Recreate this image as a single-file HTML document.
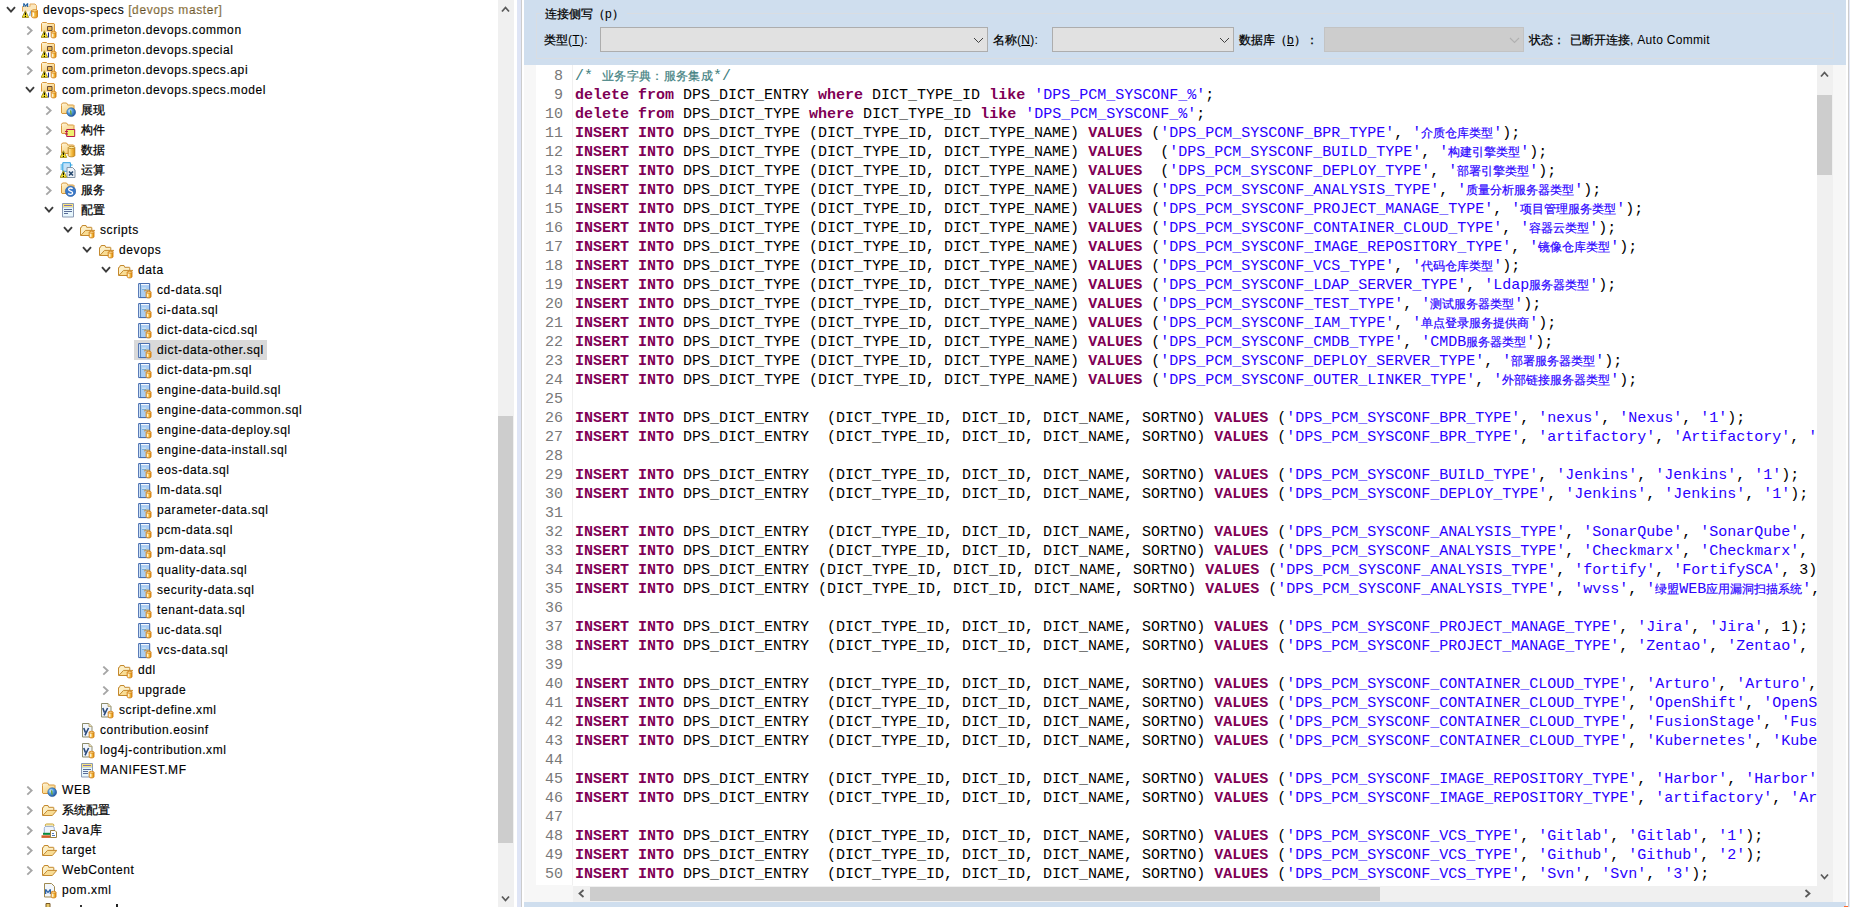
<!DOCTYPE html>
<html><head><meta charset="utf-8">
<style>
*{margin:0;padding:0;box-sizing:border-box}
html,body{width:1850px;height:907px;overflow:hidden;background:#fff}
body{position:relative;font-family:"Liberation Sans",sans-serif;font-size:12px;color:#000}
.a{position:absolute}
#tree{position:absolute;left:0;top:0;width:498px;height:907px;overflow:hidden}
.chv,.ic{position:absolute}
.tt{position:absolute;white-space:pre;line-height:20px;font-size:12px;letter-spacing:0.6px;color:#000;-webkit-text-stroke:0.15px #000}
.tt .cj{font-size:12px;letter-spacing:0;-webkit-text-stroke:0.25px #000}
.tt .br{color:#a6884c}
.selbg{position:absolute;left:134px;top:340px;width:133px;height:20px;background:#d9d9d9}
/* editor */
#ed{position:absolute;left:524px;top:0;width:1322px;height:907px;background:#f7f7f7}
#panel{position:absolute;left:0;top:0;width:1322px;height:65px;background:#cfdeee}
.gb{position:absolute;left:12px;top:13px;width:1298px;height:46px;border:1px solid #d9dde2}
.lbl{position:absolute;white-space:pre;font-size:12px;line-height:16px;letter-spacing:0.3px}
.lbl .cj{letter-spacing:0;-webkit-text-stroke:0.25px #000}
.combo{position:absolute;top:27px;height:25px;background:#e1e1e1;border:1px solid #adadad}
.combo svg{position:absolute;right:3px;top:9px}
#ruler{position:absolute;left:12px;top:65px;width:37px;height:820px;background:#fff;border-right:1px solid #f0f0f0;overflow:hidden}
#code{position:absolute;left:49px;top:65px;width:1244px;height:821px;background:#fff;overflow:hidden}
.nl{height:19px;line-height:19px;font-family:"Liberation Mono",monospace;font-size:15px;color:#787878;text-align:right;padding-right:10px;white-space:pre}
.cl{height:19px;line-height:19px;font-family:"Liberation Mono",monospace;font-size:15px;color:#000;white-space:pre;padding-left:2px}
.cl b{color:#7f0055;font-weight:bold}
.cl .st{color:#2a00ff}
.cl .cm{color:#3f7f7f}
.cl .cm .cj{letter-spacing:0.33px}
.cl .cj{font-size:12px;-webkit-text-stroke:0.2px currentColor}
#nums{position:absolute;left:0;top:2px;width:37px}
#lines{position:absolute;left:0;top:2px}
</style></head><body>
<svg width="0" height="0" style="position:absolute">
<defs>
<linearGradient id="fg" x1="0" y1="0" x2="0.6" y2="1"><stop offset="0" stop-color="#fff6dc"/><stop offset="1" stop-color="#f7cf78"/></linearGradient>
<linearGradient id="dbg" x1="0" y1="0" x2="1" y2="0"><stop offset="0" stop-color="#fff2c0"/><stop offset="0.5" stop-color="#f7c24a"/><stop offset="1" stop-color="#d98e12"/></linearGradient>
<radialGradient id="glb" cx="0.35" cy="0.35" r="0.7"><stop offset="0" stop-color="#e8f4ff"/><stop offset="0.45" stop-color="#4d9be0"/><stop offset="1" stop-color="#1f4f96"/></radialGradient>
<g id="g-fold"><path d="M1.5 3.5v-1.2l1-1.3h4l1 1.3v0.7h6l0.5 0.5v7.5l-0.5 0.5h-11.5l-0.5-0.5z" fill="url(#fg)" stroke="#d8983a"/></g>
<g id="g-ofold"><path d="M1.5 13.5V5.8q0-0.5 0.5-0.5h0.5l0.7-1.8h3.8l0.7 1.8h4.6q0.5 0 0.5 0.5v2.6" fill="#fcefc6" stroke="#c4892e"/><path d="M1.8 13.5l4.7-5.1h9.3l-4.5 5.1z" fill="#f8dc94" stroke="#c4892e"/></g>
<g id="g-warn"><path d="M3.4 8.8l3.3 6.6h-6.6z" fill="#ffea2a" stroke="#9a8a20" stroke-width="0.9" stroke-linejoin="round"/><path d="M3.4 10.6v2.6M3.4 14v0.9" stroke="#000" stroke-width="1.1"/></g>
<g id="g-db"><path d="M10.2 10.2v4.6c0 0.7 1.1 1.1 2.4 1.1s2.4-0.4 2.4-1.1v-4.6z" fill="url(#dbg)" stroke="#d07a10" stroke-width="0.9"/><ellipse cx="12.6" cy="10.2" rx="2.4" ry="0.9" fill="#ffe9a8" stroke="#d07a10" stroke-width="0.8"/><path d="M11.8 11.8v3" stroke="#fff" stroke-width="0.9"/></g>
<g id="g-glb"><circle cx="11.2" cy="10.2" r="4.4" fill="url(#glb)" stroke="#2d5f9e" stroke-width="0.6"/><path d="M10 8.2c1 0 1.8 0.6 1.5 1.6s0.8 2 -0.2 3.6c-0.5-1.2-1.5-1.8-1.2-3s-0.8-1.5-0.1-2.2z" fill="#6aa33a"/></g>
<symbol id="i-project" viewBox="0 0 16 17"><path d="M0.5 9.5v-5h7.5v-2.5h5l1.5 1.5v6" fill="#fbe7bd" stroke="#e3a85a"/><path d="M1 4.5h6.5" stroke="#f6d9a0"/><path d="M1.2 5V1.2h1.2l1.3 2 1.3-2h1.2V5h-1.1V3l-1.4 2-1.4-2v2z" fill="#1d5d9e"/><path d="M7.8 14c0-3 0.8-4.8 2.5-5.5" fill="none" stroke="#7fb2e0" stroke-width="1.3"/><use href="#g-warn"/><path d="M9.6 8.8v5.8c0 0.8 1.4 1.3 3 1.3s3-0.5 3-1.3v-5.8z" fill="url(#dbg)" stroke="#d07a10" stroke-width="0.9"/><ellipse cx="12.6" cy="8.8" rx="3" ry="1.1" fill="#ffe08a" stroke="#d07a10" stroke-width="0.8"/><path d="M11.6 10.6v3.5" stroke="#fff" stroke-width="1"/></symbol>
<symbol id="i-pkg" viewBox="0 0 16 17"><path d="M0.5 9.5v-8l1-1h4l1 1h6.5l0.5 0.5v8" fill="url(#fg)" stroke="#d8983a"/><path d="M6.5 4.5h4.5v4h-4.5z" fill="#e9b84e" stroke="#6a4a3a"/><use href="#g-warn"/><path d="M7.5 10.5v5" stroke="#1a2a8a" stroke-width="1.1"/><use href="#g-db"/></symbol>
<symbol id="i-globe" viewBox="0 0 16 17"><use href="#g-fold"/><use href="#g-glb"/></symbol>
<symbol id="i-comp" viewBox="0 0 16 17"><use href="#g-fold"/><path d="M6.7 7.5h8v7h-8z" fill="#eef070" stroke="#b81a48" stroke-width="1"/><path d="M5 9.5h3M5 12h3" stroke="#b81a48" stroke-width="1.1"/></symbol>
<symbol id="i-data" viewBox="0 0 16 17"><use href="#g-fold"/><path d="M8.2 5.5v8c0 0.8 1.5 1.3 3.3 1.3s3.3-0.5 3.3-1.3v-8z" fill="url(#dbg)" stroke="#b8801a" stroke-width="0.9"/><ellipse cx="11.5" cy="5.5" rx="3.3" ry="1.1" fill="#ffe9a0" stroke="#b8801a" stroke-width="0.8"/><use href="#g-warn"/></symbol>
<symbol id="i-logic" viewBox="0 0 16 17"><path d="M2.8 0.7h7.6v8.6h-7.6z" fill="#c4e2f8" stroke="#30a0e0" stroke-width="1"/><path d="M0.5 3h2M0.5 5h2M0.5 7h2M10.5 3h2" stroke="#20a0e0" stroke-width="1"/><path d="M7 5.5h5.5l2.5 2.5v7.5h-8z" fill="#f0f4f8" stroke="#8494a6" stroke-width="1"/><path d="M9 9.5l4 4M13 9.5l-4 4" stroke="#284a70" stroke-width="1.6"/><use href="#g-warn"/></symbol>
<symbol id="i-service" viewBox="0 0 16 17"><use href="#g-fold"/><circle cx="10.6" cy="9.3" r="5.2" fill="#3a78c8" stroke="#2a5aa0" stroke-width="0.6"/><path d="M12.6 6.8c-0.6-0.6-1.3-0.8-2-0.8-1.1 0-2 0.6-2 1.5 0 1.9 4 1.3 4 3.3 0 0.9-0.9 1.6-2.1 1.6-0.9 0-1.7-0.3-2.3-0.9" fill="none" stroke="#fff" stroke-width="1.3"/></symbol>
<symbol id="i-config" viewBox="0 0 16 17"><path d="M2.5 1.5h11v13.5h-11z" fill="#e8f7fd" stroke="#8a9ab4"/><path d="M3 2h10v3h-10z" fill="#f9e37e"/><path d="M4 3.5h8" stroke="#7a74b8" stroke-width="1"/><path d="M3 5.5h10" stroke="#b8c8d8" stroke-width="0.6"/><path d="M4 7.5h8M4 9.5h8M4 11.5h4" stroke="#4a5c8c" stroke-width="0.9"/></symbol>
<symbol id="i-ofolder" viewBox="0 0 16 17"><use href="#g-ofold"/><use href="#g-db"/></symbol>
<symbol id="i-pfolder" viewBox="0 0 16 17"><use href="#g-ofold"/></symbol>
<symbol id="i-webfolder" viewBox="0 0 16 17"><use href="#g-fold"/><use href="#g-glb"/></symbol>
<symbol id="i-sql" viewBox="0 0 16 17"><path d="M2.7 1.6h11v14h-11z" fill="#a9cdf3" stroke="#3a62a8" stroke-width="1"/><path d="M4.4 2v13.2" stroke="#4a7ab0" stroke-width="0.9"/><path d="M3.5 2.3v12.8" stroke="#dfeefb" stroke-width="0.8"/><path d="M5 2.6h8" stroke="#fff" stroke-width="1"/><path d="M6 6.3h4" stroke="#fff" stroke-width="1"/><path d="M6 7.2h4" stroke="#3a8ac0" stroke-width="0.6"/><path d="M8.8 9.5v-1.3h4.5l1.5 1.5" fill="none" stroke="#c88a20" stroke-width="0.9"/><use href="#g-db"/></symbol>
<symbol id="i-xml" viewBox="0 0 16 17"><path d="M3.5 1.5h6.5l3 3v10.5h-9.5z" fill="#f2f6fb" stroke="#8c8c6c"/><path d="M10 1.5v3h3" fill="#e8dcb0" stroke="#b0a070" stroke-width="0.8"/><path d="M4.8 6l1.6 4.5M9.6 6l-3.6 7.4" stroke="#2a4a7c" stroke-width="1.6"/><use href="#g-db"/></symbol>
<symbol id="i-mf" viewBox="0 0 16 17"><path d="M2.5 1.5h11v13.5h-11z" fill="#e8f7fd" stroke="#8a9ab4"/><path d="M3 2h10v3h-10z" fill="#f9e37e"/><path d="M4 3.5h8" stroke="#7a74b8" stroke-width="1"/><path d="M3 5.5h10" stroke="#b8c8d8" stroke-width="0.6"/><path d="M4 7.5h8M4 9.5h5M4 11.5h5" stroke="#4a5c8c" stroke-width="0.9"/><use href="#g-db"/></symbol>
<symbol id="i-lib" viewBox="0 0 16 17"><rect x="4.3" y="2" width="8.6" height="2.6" rx="1.3" fill="#fff4c0" stroke="#c8a030" stroke-width="1"/><path d="M3.3 12v-5.5c0-1.2 0.8-2 1.8-2.2h6.4c1 0.2 1.8 1 1.8 2.2v5.5z" fill="#eef4fc" stroke="#7a98cc" stroke-width="0.8"/><path d="M2 11.8h7.5" stroke="#0a8a3a" stroke-width="2"/><path d="M0.5 14.6h9.5" stroke="#d0602a" stroke-width="2.6"/><path d="M9.5 8.5h4.5l1.5 1.5v5.5h-6z" fill="#fff" stroke="#9a8040" stroke-width="1"/><path d="M11 11.5h2M11 13.5h3" stroke="#3a6ab0" stroke-width="0.9"/></symbol>
<symbol id="i-pom" viewBox="0 0 16 17"><path d="M3.5 1.5h7l3 3v10.5h-10z" fill="#f2f6fb" stroke="#a08a50"/><path d="M4 12V7.2h1.4l1.6 2.4 1.6-2.4H10V12H8.7V9.3L7 11.5 5.3 9.3V12z" fill="#2a62a8"/><use href="#g-db"/></symbol>
<symbol id="i-partial" viewBox="0 0 16 17"><path d="M5 1.5h4v6h-4z" fill="#e8c868" stroke="#7a5a28"/></symbol>
</defs>
</svg>

<div id="tree">
<div class="selbg"></div>
<svg class="chv" style="left:6px;top:6px" width="10" height="7" viewBox="0 0 10 7"><path d="M1 1.2 L5 5.6 L9 1.2" fill="none" stroke="#3c3c3c" stroke-width="1.9"/></svg><svg class="ic" style="left:22px;top:2px" width="16" height="17"><use href="#i-project"/></svg><div class="tt" style="left:43px;top:0px">devops-specs<span class="br"> [devops master]</span></div>
<svg class="chv" style="left:26px;top:26px" width="7" height="10" viewBox="0 0 7 10"><path d="M1.3 0.6 L5.6 4.6 L1.3 8.6" fill="none" stroke="#a6a6a6" stroke-width="1.9"/></svg><svg class="ic" style="left:41px;top:22px" width="16" height="17"><use href="#i-pkg"/></svg><div class="tt" style="left:62px;top:20px">com.primeton.devops.common</div>
<svg class="chv" style="left:26px;top:46px" width="7" height="10" viewBox="0 0 7 10"><path d="M1.3 0.6 L5.6 4.6 L1.3 8.6" fill="none" stroke="#a6a6a6" stroke-width="1.9"/></svg><svg class="ic" style="left:41px;top:42px" width="16" height="17"><use href="#i-pkg"/></svg><div class="tt" style="left:62px;top:40px">com.primeton.devops.special</div>
<svg class="chv" style="left:26px;top:66px" width="7" height="10" viewBox="0 0 7 10"><path d="M1.3 0.6 L5.6 4.6 L1.3 8.6" fill="none" stroke="#a6a6a6" stroke-width="1.9"/></svg><svg class="ic" style="left:41px;top:62px" width="16" height="17"><use href="#i-pkg"/></svg><div class="tt" style="left:62px;top:60px">com.primeton.devops.specs.api</div>
<svg class="chv" style="left:25px;top:86px" width="10" height="7" viewBox="0 0 10 7"><path d="M1 1.2 L5 5.6 L9 1.2" fill="none" stroke="#3c3c3c" stroke-width="1.9"/></svg><svg class="ic" style="left:41px;top:82px" width="16" height="17"><use href="#i-pkg"/></svg><div class="tt" style="left:62px;top:80px">com.primeton.devops.specs.model</div>
<svg class="chv" style="left:45px;top:106px" width="7" height="10" viewBox="0 0 7 10"><path d="M1.3 0.6 L5.6 4.6 L1.3 8.6" fill="none" stroke="#a6a6a6" stroke-width="1.9"/></svg><svg class="ic" style="left:60px;top:102px" width="16" height="17"><use href="#i-globe"/></svg><div class="tt" style="left:81px;top:100px"><span class="cj">展现</span></div>
<svg class="chv" style="left:45px;top:126px" width="7" height="10" viewBox="0 0 7 10"><path d="M1.3 0.6 L5.6 4.6 L1.3 8.6" fill="none" stroke="#a6a6a6" stroke-width="1.9"/></svg><svg class="ic" style="left:60px;top:122px" width="16" height="17"><use href="#i-comp"/></svg><div class="tt" style="left:81px;top:120px"><span class="cj">构件</span></div>
<svg class="chv" style="left:45px;top:146px" width="7" height="10" viewBox="0 0 7 10"><path d="M1.3 0.6 L5.6 4.6 L1.3 8.6" fill="none" stroke="#a6a6a6" stroke-width="1.9"/></svg><svg class="ic" style="left:60px;top:142px" width="16" height="17"><use href="#i-data"/></svg><div class="tt" style="left:81px;top:140px"><span class="cj">数据</span></div>
<svg class="chv" style="left:45px;top:166px" width="7" height="10" viewBox="0 0 7 10"><path d="M1.3 0.6 L5.6 4.6 L1.3 8.6" fill="none" stroke="#a6a6a6" stroke-width="1.9"/></svg><svg class="ic" style="left:60px;top:162px" width="16" height="17"><use href="#i-logic"/></svg><div class="tt" style="left:81px;top:160px"><span class="cj">运算</span></div>
<svg class="chv" style="left:45px;top:186px" width="7" height="10" viewBox="0 0 7 10"><path d="M1.3 0.6 L5.6 4.6 L1.3 8.6" fill="none" stroke="#a6a6a6" stroke-width="1.9"/></svg><svg class="ic" style="left:60px;top:182px" width="16" height="17"><use href="#i-service"/></svg><div class="tt" style="left:81px;top:180px"><span class="cj">服务</span></div>
<svg class="chv" style="left:44px;top:206px" width="10" height="7" viewBox="0 0 10 7"><path d="M1 1.2 L5 5.6 L9 1.2" fill="none" stroke="#3c3c3c" stroke-width="1.9"/></svg><svg class="ic" style="left:60px;top:202px" width="16" height="17"><use href="#i-config"/></svg><div class="tt" style="left:81px;top:200px"><span class="cj">配置</span></div>
<svg class="chv" style="left:63px;top:226px" width="10" height="7" viewBox="0 0 10 7"><path d="M1 1.2 L5 5.6 L9 1.2" fill="none" stroke="#3c3c3c" stroke-width="1.9"/></svg><svg class="ic" style="left:79px;top:222px" width="16" height="17"><use href="#i-ofolder"/></svg><div class="tt" style="left:100px;top:220px">scripts</div>
<svg class="chv" style="left:82px;top:246px" width="10" height="7" viewBox="0 0 10 7"><path d="M1 1.2 L5 5.6 L9 1.2" fill="none" stroke="#3c3c3c" stroke-width="1.9"/></svg><svg class="ic" style="left:98px;top:242px" width="16" height="17"><use href="#i-ofolder"/></svg><div class="tt" style="left:119px;top:240px">devops</div>
<svg class="chv" style="left:101px;top:266px" width="10" height="7" viewBox="0 0 10 7"><path d="M1 1.2 L5 5.6 L9 1.2" fill="none" stroke="#3c3c3c" stroke-width="1.9"/></svg><svg class="ic" style="left:117px;top:262px" width="16" height="17"><use href="#i-ofolder"/></svg><div class="tt" style="left:138px;top:260px">data</div>
<svg class="ic" style="left:136px;top:282px" width="16" height="17"><use href="#i-sql"/></svg><div class="tt" style="left:157px;top:280px">cd-data.sql</div>
<svg class="ic" style="left:136px;top:302px" width="16" height="17"><use href="#i-sql"/></svg><div class="tt" style="left:157px;top:300px">ci-data.sql</div>
<svg class="ic" style="left:136px;top:322px" width="16" height="17"><use href="#i-sql"/></svg><div class="tt" style="left:157px;top:320px">dict-data-cicd.sql</div>
<svg class="ic" style="left:136px;top:342px" width="16" height="17"><use href="#i-sql"/></svg><div class="tt sel" style="left:157px;top:340px">dict-data-other.sql</div>
<svg class="ic" style="left:136px;top:362px" width="16" height="17"><use href="#i-sql"/></svg><div class="tt" style="left:157px;top:360px">dict-data-pm.sql</div>
<svg class="ic" style="left:136px;top:382px" width="16" height="17"><use href="#i-sql"/></svg><div class="tt" style="left:157px;top:380px">engine-data-build.sql</div>
<svg class="ic" style="left:136px;top:402px" width="16" height="17"><use href="#i-sql"/></svg><div class="tt" style="left:157px;top:400px">engine-data-common.sql</div>
<svg class="ic" style="left:136px;top:422px" width="16" height="17"><use href="#i-sql"/></svg><div class="tt" style="left:157px;top:420px">engine-data-deploy.sql</div>
<svg class="ic" style="left:136px;top:442px" width="16" height="17"><use href="#i-sql"/></svg><div class="tt" style="left:157px;top:440px">engine-data-install.sql</div>
<svg class="ic" style="left:136px;top:462px" width="16" height="17"><use href="#i-sql"/></svg><div class="tt" style="left:157px;top:460px">eos-data.sql</div>
<svg class="ic" style="left:136px;top:482px" width="16" height="17"><use href="#i-sql"/></svg><div class="tt" style="left:157px;top:480px">lm-data.sql</div>
<svg class="ic" style="left:136px;top:502px" width="16" height="17"><use href="#i-sql"/></svg><div class="tt" style="left:157px;top:500px">parameter-data.sql</div>
<svg class="ic" style="left:136px;top:522px" width="16" height="17"><use href="#i-sql"/></svg><div class="tt" style="left:157px;top:520px">pcm-data.sql</div>
<svg class="ic" style="left:136px;top:542px" width="16" height="17"><use href="#i-sql"/></svg><div class="tt" style="left:157px;top:540px">pm-data.sql</div>
<svg class="ic" style="left:136px;top:562px" width="16" height="17"><use href="#i-sql"/></svg><div class="tt" style="left:157px;top:560px">quality-data.sql</div>
<svg class="ic" style="left:136px;top:582px" width="16" height="17"><use href="#i-sql"/></svg><div class="tt" style="left:157px;top:580px">security-data.sql</div>
<svg class="ic" style="left:136px;top:602px" width="16" height="17"><use href="#i-sql"/></svg><div class="tt" style="left:157px;top:600px">tenant-data.sql</div>
<svg class="ic" style="left:136px;top:622px" width="16" height="17"><use href="#i-sql"/></svg><div class="tt" style="left:157px;top:620px">uc-data.sql</div>
<svg class="ic" style="left:136px;top:642px" width="16" height="17"><use href="#i-sql"/></svg><div class="tt" style="left:157px;top:640px">vcs-data.sql</div>
<svg class="chv" style="left:102px;top:666px" width="7" height="10" viewBox="0 0 7 10"><path d="M1.3 0.6 L5.6 4.6 L1.3 8.6" fill="none" stroke="#a6a6a6" stroke-width="1.9"/></svg><svg class="ic" style="left:117px;top:662px" width="16" height="17"><use href="#i-ofolder"/></svg><div class="tt" style="left:138px;top:660px">ddl</div>
<svg class="chv" style="left:102px;top:686px" width="7" height="10" viewBox="0 0 7 10"><path d="M1.3 0.6 L5.6 4.6 L1.3 8.6" fill="none" stroke="#a6a6a6" stroke-width="1.9"/></svg><svg class="ic" style="left:117px;top:682px" width="16" height="17"><use href="#i-ofolder"/></svg><div class="tt" style="left:138px;top:680px">upgrade</div>
<svg class="ic" style="left:98px;top:702px" width="16" height="17"><use href="#i-xml"/></svg><div class="tt" style="left:119px;top:700px">script-define.xml</div>
<svg class="ic" style="left:79px;top:722px" width="16" height="17"><use href="#i-xml"/></svg><div class="tt" style="left:100px;top:720px">contribution.eosinf</div>
<svg class="ic" style="left:79px;top:742px" width="16" height="17"><use href="#i-xml"/></svg><div class="tt" style="left:100px;top:740px">log4j-contribution.xml</div>
<svg class="ic" style="left:79px;top:762px" width="16" height="17"><use href="#i-mf"/></svg><div class="tt" style="left:100px;top:760px">MANIFEST.MF</div>
<svg class="chv" style="left:26px;top:786px" width="7" height="10" viewBox="0 0 7 10"><path d="M1.3 0.6 L5.6 4.6 L1.3 8.6" fill="none" stroke="#a6a6a6" stroke-width="1.9"/></svg><svg class="ic" style="left:41px;top:782px" width="16" height="17"><use href="#i-webfolder"/></svg><div class="tt" style="left:62px;top:780px">WEB</div>
<svg class="chv" style="left:26px;top:806px" width="7" height="10" viewBox="0 0 7 10"><path d="M1.3 0.6 L5.6 4.6 L1.3 8.6" fill="none" stroke="#a6a6a6" stroke-width="1.9"/></svg><svg class="ic" style="left:41px;top:802px" width="16" height="17"><use href="#i-pfolder"/></svg><div class="tt" style="left:62px;top:800px"><span class="cj">系统配置</span></div>
<svg class="chv" style="left:26px;top:826px" width="7" height="10" viewBox="0 0 7 10"><path d="M1.3 0.6 L5.6 4.6 L1.3 8.6" fill="none" stroke="#a6a6a6" stroke-width="1.9"/></svg><svg class="ic" style="left:41px;top:822px" width="16" height="17"><use href="#i-lib"/></svg><div class="tt" style="left:62px;top:820px">Java<span class="cj">库</span></div>
<svg class="chv" style="left:26px;top:846px" width="7" height="10" viewBox="0 0 7 10"><path d="M1.3 0.6 L5.6 4.6 L1.3 8.6" fill="none" stroke="#a6a6a6" stroke-width="1.9"/></svg><svg class="ic" style="left:41px;top:842px" width="16" height="17"><use href="#i-pfolder"/></svg><div class="tt" style="left:62px;top:840px">target</div>
<svg class="chv" style="left:26px;top:866px" width="7" height="10" viewBox="0 0 7 10"><path d="M1.3 0.6 L5.6 4.6 L1.3 8.6" fill="none" stroke="#a6a6a6" stroke-width="1.9"/></svg><svg class="ic" style="left:41px;top:862px" width="16" height="17"><use href="#i-pfolder"/></svg><div class="tt" style="left:62px;top:860px">WebContent</div>
<svg class="ic" style="left:41px;top:882px" width="16" height="17"><use href="#i-pom"/></svg><div class="tt" style="left:62px;top:880px">pom.xml</div>
<svg class="ic" style="left:41px;top:902px" width="16" height="17"><use href="#i-partial"/></svg><div class="a" style="left:80px;top:905px;width:2px;height:2px;background:#333"></div><div class="a" style="left:116px;top:904px;width:1.5px;height:3px;background:#222"></div>
</div>
<!-- tree scrollbar -->
<div class="a" style="left:498px;top:0;width:16px;height:907px;background:#f0f0f0"></div>
<div class="a" style="left:498px;top:416px;width:15px;height:427px;background:#cdcdcd"></div>
<svg class="a" style="left:501px;top:5px" width="9" height="8" viewBox="0 0 9 8"><path d="M1 6.5L4.5 2.5L8 6.5" fill="none" stroke="#5a5a5a" stroke-width="1.8"/></svg>
<svg class="a" style="left:501px;top:895px" width="9" height="8" viewBox="0 0 9 8"><path d="M1 1.5L4.5 5.5L8 1.5" fill="none" stroke="#5a5a5a" stroke-width="1.8"/></svg>
<!-- sash -->
<div class="a" style="left:517px;top:0;width:4px;height:907px;background:#dfe5f6"></div>
<div class="a" style="left:521px;top:0;width:1px;height:907px;background:#cccccc"></div>
<div id="ed">
 <div id="panel">
  <div class="gb"></div>
  <div class="lbl" style="left:18px;top:6px;background:#cfdeee;padding:0 3px"><span class="cj">连接侧写（</span>p<span class="cj">）</span></div>
  <div class="lbl" style="left:20px;top:32px"><span class="cj">类型</span>(<u>T</u>):</div>
  <div class="combo" style="left:76px;width:388px"><svg width="11" height="7" viewBox="0 0 11 7"><path d="M1 1L5.5 5.5L10 1" fill="none" stroke="#404040" stroke-width="1"/></svg></div>
  <div class="lbl" style="left:469px;top:32px"><span class="cj">名称</span>(<u>N</u>):</div>
  <div class="combo" style="left:528px;width:182px"><svg width="11" height="7" viewBox="0 0 11 7"><path d="M1 1L5.5 5.5L10 1" fill="none" stroke="#404040" stroke-width="1"/></svg></div>
  <div class="lbl" style="left:715px;top:32px"><span class="cj">数据库（</span><u>b</u><span class="cj">）：</span></div>
  <div class="combo" style="left:800px;width:200px;background:#cdcdcd;border-color:#c3c3c3"><svg width="11" height="7" viewBox="0 0 11 7"><path d="M1 1L5.5 5.5L10 1" fill="none" stroke="#b0b0b0" stroke-width="1.1"/></svg></div>
  <div class="lbl" style="left:1005px;top:32px"><span class="cj">状态：</span></div>
  <div class="lbl" style="left:1046px;top:32px"><span class="cj">已断开连接</span>, Auto Commit</div>
 </div>
 <div id="ruler"><div id="nums"><div class="nl">8</div>
<div class="nl">9</div>
<div class="nl">10</div>
<div class="nl">11</div>
<div class="nl">12</div>
<div class="nl">13</div>
<div class="nl">14</div>
<div class="nl">15</div>
<div class="nl">16</div>
<div class="nl">17</div>
<div class="nl">18</div>
<div class="nl">19</div>
<div class="nl">20</div>
<div class="nl">21</div>
<div class="nl">22</div>
<div class="nl">23</div>
<div class="nl">24</div>
<div class="nl">25</div>
<div class="nl">26</div>
<div class="nl">27</div>
<div class="nl">28</div>
<div class="nl">29</div>
<div class="nl">30</div>
<div class="nl">31</div>
<div class="nl">32</div>
<div class="nl">33</div>
<div class="nl">34</div>
<div class="nl">35</div>
<div class="nl">36</div>
<div class="nl">37</div>
<div class="nl">38</div>
<div class="nl">39</div>
<div class="nl">40</div>
<div class="nl">41</div>
<div class="nl">42</div>
<div class="nl">43</div>
<div class="nl">44</div>
<div class="nl">45</div>
<div class="nl">46</div>
<div class="nl">47</div>
<div class="nl">48</div>
<div class="nl">49</div>
<div class="nl">50</div></div></div>
 <div id="code"><div id="lines"><div class="cl"><span class="cm">/* <span class="cj">业务字典：服务集成</span>*/</span></div>
<div class="cl"><b>delete</b> <b>from</b> DPS_DICT_ENTRY <b>where</b> DICT_TYPE_ID <b>like</b> <span class="st">&#x27;DPS_PCM_SYSCONF_%&#x27;</span>;</div>
<div class="cl"><b>delete</b> <b>from</b> DPS_DICT_TYPE <b>where</b> DICT_TYPE_ID <b>like</b> <span class="st">&#x27;DPS_PCM_SYSCONF_%&#x27;</span>;</div>
<div class="cl"><b>INSERT</b> <b>INTO</b> DPS_DICT_TYPE (DICT_TYPE_ID, DICT_TYPE_NAME) <b>VALUES</b> (<span class="st">&#x27;DPS_PCM_SYSCONF_BPR_TYPE&#x27;</span>, <span class="st">&#x27;<span class="cj">介质仓库类型</span>&#x27;</span>);</div>
<div class="cl"><b>INSERT</b> <b>INTO</b> DPS_DICT_TYPE (DICT_TYPE_ID, DICT_TYPE_NAME) <b>VALUES</b>  (<span class="st">&#x27;DPS_PCM_SYSCONF_BUILD_TYPE&#x27;</span>, <span class="st">&#x27;<span class="cj">构建引擎类型</span>&#x27;</span>);</div>
<div class="cl"><b>INSERT</b> <b>INTO</b> DPS_DICT_TYPE (DICT_TYPE_ID, DICT_TYPE_NAME) <b>VALUES</b>  (<span class="st">&#x27;DPS_PCM_SYSCONF_DEPLOY_TYPE&#x27;</span>, <span class="st">&#x27;<span class="cj">部署引擎类型</span>&#x27;</span>);</div>
<div class="cl"><b>INSERT</b> <b>INTO</b> DPS_DICT_TYPE (DICT_TYPE_ID, DICT_TYPE_NAME) <b>VALUES</b> (<span class="st">&#x27;DPS_PCM_SYSCONF_ANALYSIS_TYPE&#x27;</span>, <span class="st">&#x27;<span class="cj">质量分析服务器类型</span>&#x27;</span>);</div>
<div class="cl"><b>INSERT</b> <b>INTO</b> DPS_DICT_TYPE (DICT_TYPE_ID, DICT_TYPE_NAME) <b>VALUES</b> (<span class="st">&#x27;DPS_PCM_SYSCONF_PROJECT_MANAGE_TYPE&#x27;</span>, <span class="st">&#x27;<span class="cj">项目管理服务类型</span>&#x27;</span>);</div>
<div class="cl"><b>INSERT</b> <b>INTO</b> DPS_DICT_TYPE (DICT_TYPE_ID, DICT_TYPE_NAME) <b>VALUES</b> (<span class="st">&#x27;DPS_PCM_SYSCONF_CONTAINER_CLOUD_TYPE&#x27;</span>, <span class="st">&#x27;<span class="cj">容器云类型</span>&#x27;</span>);</div>
<div class="cl"><b>INSERT</b> <b>INTO</b> DPS_DICT_TYPE (DICT_TYPE_ID, DICT_TYPE_NAME) <b>VALUES</b> (<span class="st">&#x27;DPS_PCM_SYSCONF_IMAGE_REPOSITORY_TYPE&#x27;</span>, <span class="st">&#x27;<span class="cj">镜像仓库类型</span>&#x27;</span>);</div>
<div class="cl"><b>INSERT</b> <b>INTO</b> DPS_DICT_TYPE (DICT_TYPE_ID, DICT_TYPE_NAME) <b>VALUES</b> (<span class="st">&#x27;DPS_PCM_SYSCONF_VCS_TYPE&#x27;</span>, <span class="st">&#x27;<span class="cj">代码仓库类型</span>&#x27;</span>);</div>
<div class="cl"><b>INSERT</b> <b>INTO</b> DPS_DICT_TYPE (DICT_TYPE_ID, DICT_TYPE_NAME) <b>VALUES</b> (<span class="st">&#x27;DPS_PCM_SYSCONF_LDAP_SERVER_TYPE&#x27;</span>, <span class="st">&#x27;Ldap<span class="cj">服务器类型</span>&#x27;</span>);</div>
<div class="cl"><b>INSERT</b> <b>INTO</b> DPS_DICT_TYPE (DICT_TYPE_ID, DICT_TYPE_NAME) <b>VALUES</b> (<span class="st">&#x27;DPS_PCM_SYSCONF_TEST_TYPE&#x27;</span>, <span class="st">&#x27;<span class="cj">测试服务器类型</span>&#x27;</span>);</div>
<div class="cl"><b>INSERT</b> <b>INTO</b> DPS_DICT_TYPE (DICT_TYPE_ID, DICT_TYPE_NAME) <b>VALUES</b> (<span class="st">&#x27;DPS_PCM_SYSCONF_IAM_TYPE&#x27;</span>, <span class="st">&#x27;<span class="cj">单点登录服务提供商</span>&#x27;</span>);</div>
<div class="cl"><b>INSERT</b> <b>INTO</b> DPS_DICT_TYPE (DICT_TYPE_ID, DICT_TYPE_NAME) <b>VALUES</b> (<span class="st">&#x27;DPS_PCM_SYSCONF_CMDB_TYPE&#x27;</span>, <span class="st">&#x27;CMDB<span class="cj">服务器类型</span>&#x27;</span>);</div>
<div class="cl"><b>INSERT</b> <b>INTO</b> DPS_DICT_TYPE (DICT_TYPE_ID, DICT_TYPE_NAME) <b>VALUES</b> (<span class="st">&#x27;DPS_PCM_SYSCONF_DEPLOY_SERVER_TYPE&#x27;</span>, <span class="st">&#x27;<span class="cj">部署服务器类型</span>&#x27;</span>);</div>
<div class="cl"><b>INSERT</b> <b>INTO</b> DPS_DICT_TYPE (DICT_TYPE_ID, DICT_TYPE_NAME) <b>VALUES</b> (<span class="st">&#x27;DPS_PCM_SYSCONF_OUTER_LINKER_TYPE&#x27;</span>, <span class="st">&#x27;<span class="cj">外部链接服务器类型</span>&#x27;</span>);</div>
<div class="cl"></div>
<div class="cl"><b>INSERT</b> <b>INTO</b> DPS_DICT_ENTRY  (DICT_TYPE_ID, DICT_ID, DICT_NAME, SORTNO) <b>VALUES</b> (<span class="st">&#x27;DPS_PCM_SYSCONF_BPR_TYPE&#x27;</span>, <span class="st">&#x27;nexus&#x27;</span>, <span class="st">&#x27;Nexus&#x27;</span>, <span class="st">&#x27;1&#x27;</span>);</div>
<div class="cl"><b>INSERT</b> <b>INTO</b> DPS_DICT_ENTRY  (DICT_TYPE_ID, DICT_ID, DICT_NAME, SORTNO) <b>VALUES</b> (<span class="st">&#x27;DPS_PCM_SYSCONF_BPR_TYPE&#x27;</span>, <span class="st">&#x27;artifactory&#x27;</span>, <span class="st">&#x27;Artifactory&#x27;</span>, <span class="st">&#x27;2&#x27;</span>);</div>
<div class="cl"></div>
<div class="cl"><b>INSERT</b> <b>INTO</b> DPS_DICT_ENTRY  (DICT_TYPE_ID, DICT_ID, DICT_NAME, SORTNO) <b>VALUES</b> (<span class="st">&#x27;DPS_PCM_SYSCONF_BUILD_TYPE&#x27;</span>, <span class="st">&#x27;Jenkins&#x27;</span>, <span class="st">&#x27;Jenkins&#x27;</span>, <span class="st">&#x27;1&#x27;</span>);</div>
<div class="cl"><b>INSERT</b> <b>INTO</b> DPS_DICT_ENTRY  (DICT_TYPE_ID, DICT_ID, DICT_NAME, SORTNO) <b>VALUES</b> (<span class="st">&#x27;DPS_PCM_SYSCONF_DEPLOY_TYPE&#x27;</span>, <span class="st">&#x27;Jenkins&#x27;</span>, <span class="st">&#x27;Jenkins&#x27;</span>, <span class="st">&#x27;1&#x27;</span>);</div>
<div class="cl"></div>
<div class="cl"><b>INSERT</b> <b>INTO</b> DPS_DICT_ENTRY  (DICT_TYPE_ID, DICT_ID, DICT_NAME, SORTNO) <b>VALUES</b> (<span class="st">&#x27;DPS_PCM_SYSCONF_ANALYSIS_TYPE&#x27;</span>, <span class="st">&#x27;SonarQube&#x27;</span>, <span class="st">&#x27;SonarQube&#x27;</span>, <span class="st">&#x27;1&#x27;</span>);</div>
<div class="cl"><b>INSERT</b> <b>INTO</b> DPS_DICT_ENTRY  (DICT_TYPE_ID, DICT_ID, DICT_NAME, SORTNO) <b>VALUES</b> (<span class="st">&#x27;DPS_PCM_SYSCONF_ANALYSIS_TYPE&#x27;</span>, <span class="st">&#x27;Checkmarx&#x27;</span>, <span class="st">&#x27;Checkmarx&#x27;</span>, <span class="st">&#x27;2&#x27;</span>);</div>
<div class="cl"><b>INSERT</b> <b>INTO</b> DPS_DICT_ENTRY (DICT_TYPE_ID, DICT_ID, DICT_NAME, SORTNO) <b>VALUES</b> (<span class="st">&#x27;DPS_PCM_SYSCONF_ANALYSIS_TYPE&#x27;</span>, <span class="st">&#x27;fortify&#x27;</span>, <span class="st">&#x27;FortifySCA&#x27;</span>, 3);</div>
<div class="cl"><b>INSERT</b> <b>INTO</b> DPS_DICT_ENTRY (DICT_TYPE_ID, DICT_ID, DICT_NAME, SORTNO) <b>VALUES</b> (<span class="st">&#x27;DPS_PCM_SYSCONF_ANALYSIS_TYPE&#x27;</span>, <span class="st">&#x27;wvss&#x27;</span>, <span class="st">&#x27;<span class="cj">绿盟</span>WEB<span class="cj">应用漏洞扫描系统</span>&#x27;</span>, 4);</div>
<div class="cl"></div>
<div class="cl"><b>INSERT</b> <b>INTO</b> DPS_DICT_ENTRY  (DICT_TYPE_ID, DICT_ID, DICT_NAME, SORTNO) <b>VALUES</b> (<span class="st">&#x27;DPS_PCM_SYSCONF_PROJECT_MANAGE_TYPE&#x27;</span>, <span class="st">&#x27;Jira&#x27;</span>, <span class="st">&#x27;Jira&#x27;</span>, 1);</div>
<div class="cl"><b>INSERT</b> <b>INTO</b> DPS_DICT_ENTRY  (DICT_TYPE_ID, DICT_ID, DICT_NAME, SORTNO) <b>VALUES</b> (<span class="st">&#x27;DPS_PCM_SYSCONF_PROJECT_MANAGE_TYPE&#x27;</span>, <span class="st">&#x27;Zentao&#x27;</span>, <span class="st">&#x27;Zentao&#x27;</span>, 2);</div>
<div class="cl"></div>
<div class="cl"><b>INSERT</b> <b>INTO</b> DPS_DICT_ENTRY  (DICT_TYPE_ID, DICT_ID, DICT_NAME, SORTNO) <b>VALUES</b> (<span class="st">&#x27;DPS_PCM_SYSCONF_CONTAINER_CLOUD_TYPE&#x27;</span>, <span class="st">&#x27;Arturo&#x27;</span>, <span class="st">&#x27;Arturo&#x27;</span>, <span class="st">&#x27;1&#x27;</span>);</div>
<div class="cl"><b>INSERT</b> <b>INTO</b> DPS_DICT_ENTRY  (DICT_TYPE_ID, DICT_ID, DICT_NAME, SORTNO) <b>VALUES</b> (<span class="st">&#x27;DPS_PCM_SYSCONF_CONTAINER_CLOUD_TYPE&#x27;</span>, <span class="st">&#x27;OpenShift&#x27;</span>, <span class="st">&#x27;OpenShift&#x27;</span>, <span class="st">&#x27;2&#x27;</span>);</div>
<div class="cl"><b>INSERT</b> <b>INTO</b> DPS_DICT_ENTRY  (DICT_TYPE_ID, DICT_ID, DICT_NAME, SORTNO) <b>VALUES</b> (<span class="st">&#x27;DPS_PCM_SYSCONF_CONTAINER_CLOUD_TYPE&#x27;</span>, <span class="st">&#x27;FusionStage&#x27;</span>, <span class="st">&#x27;FusionStage&#x27;</span>, <span class="st">&#x27;3&#x27;</span>);</div>
<div class="cl"><b>INSERT</b> <b>INTO</b> DPS_DICT_ENTRY  (DICT_TYPE_ID, DICT_ID, DICT_NAME, SORTNO) <b>VALUES</b> (<span class="st">&#x27;DPS_PCM_SYSCONF_CONTAINER_CLOUD_TYPE&#x27;</span>, <span class="st">&#x27;Kubernetes&#x27;</span>, <span class="st">&#x27;Kubernetes&#x27;</span>, <span class="st">&#x27;4&#x27;</span>);</div>
<div class="cl"></div>
<div class="cl"><b>INSERT</b> <b>INTO</b> DPS_DICT_ENTRY  (DICT_TYPE_ID, DICT_ID, DICT_NAME, SORTNO) <b>VALUES</b> (<span class="st">&#x27;DPS_PCM_SYSCONF_IMAGE_REPOSITORY_TYPE&#x27;</span>, <span class="st">&#x27;Harbor&#x27;</span>, <span class="st">&#x27;Harbor&#x27;</span>, <span class="st">&#x27;1&#x27;</span>);</div>
<div class="cl"><b>INSERT</b> <b>INTO</b> DPS_DICT_ENTRY  (DICT_TYPE_ID, DICT_ID, DICT_NAME, SORTNO) <b>VALUES</b> (<span class="st">&#x27;DPS_PCM_SYSCONF_IMAGE_REPOSITORY_TYPE&#x27;</span>, <span class="st">&#x27;artifactory&#x27;</span>, <span class="st">&#x27;Artifactory&#x27;</span>, <span class="st">&#x27;2&#x27;</span>);</div>
<div class="cl"></div>
<div class="cl"><b>INSERT</b> <b>INTO</b> DPS_DICT_ENTRY  (DICT_TYPE_ID, DICT_ID, DICT_NAME, SORTNO) <b>VALUES</b> (<span class="st">&#x27;DPS_PCM_SYSCONF_VCS_TYPE&#x27;</span>, <span class="st">&#x27;Gitlab&#x27;</span>, <span class="st">&#x27;Gitlab&#x27;</span>, <span class="st">&#x27;1&#x27;</span>);</div>
<div class="cl"><b>INSERT</b> <b>INTO</b> DPS_DICT_ENTRY  (DICT_TYPE_ID, DICT_ID, DICT_NAME, SORTNO) <b>VALUES</b> (<span class="st">&#x27;DPS_PCM_SYSCONF_VCS_TYPE&#x27;</span>, <span class="st">&#x27;Github&#x27;</span>, <span class="st">&#x27;Github&#x27;</span>, <span class="st">&#x27;2&#x27;</span>);</div>
<div class="cl"><b>INSERT</b> <b>INTO</b> DPS_DICT_ENTRY  (DICT_TYPE_ID, DICT_ID, DICT_NAME, SORTNO) <b>VALUES</b> (<span class="st">&#x27;DPS_PCM_SYSCONF_VCS_TYPE&#x27;</span>, <span class="st">&#x27;Svn&#x27;</span>, <span class="st">&#x27;Svn&#x27;</span>, <span class="st">&#x27;3&#x27;</span>);</div></div></div>
 <!-- vscroll -->
 <div class="a" style="left:1293px;top:65px;width:16px;height:821px;background:#f0f0f0"></div>
 <div class="a" style="left:1293px;top:95px;width:15px;height:80px;background:#cdcdcd"></div>
 <svg class="a" style="left:1296px;top:70px" width="9" height="8" viewBox="0 0 9 8"><path d="M1 6.5L4.5 2.5L8 6.5" fill="none" stroke="#5a5a5a" stroke-width="1.8"/></svg>
 <svg class="a" style="left:1296px;top:873px" width="9" height="8" viewBox="0 0 9 8"><path d="M1 1.5L4.5 5.5L8 1.5" fill="none" stroke="#5a5a5a" stroke-width="1.8"/></svg>
 <!-- hscroll -->
 <div class="a" style="left:49px;top:886px;width:1260px;height:16px;background:#f0f0f0"></div>
 <div class="a" style="left:66px;top:887px;width:790px;height:14px;background:#cdcdcd"></div>
 <svg class="a" style="left:53px;top:889px" width="8" height="9" viewBox="0 0 8 9"><path d="M6.5 1L2.5 4.5L6.5 8" fill="none" stroke="#5a5a5a" stroke-width="1.8"/></svg>
 <svg class="a" style="left:1280px;top:889px" width="8" height="9" viewBox="0 0 8 9"><path d="M1.5 1L5.5 4.5L1.5 8" fill="none" stroke="#5a5a5a" stroke-width="1.8"/></svg>
 <div class="a" style="left:0;top:902px;width:1322px;height:5px;background:#cfdeee"></div>
</div>
<div class="a" style="left:1844px;top:906px;width:6px;height:1px;background:#ff6a30"></div>
<div class="a" style="left:1848px;top:0;width:1px;height:907px;background:#cccccc"></div>
<div class="a" style="left:1849px;top:0;width:1px;height:907px;background:#e4e8f7"></div>
</body></html>
